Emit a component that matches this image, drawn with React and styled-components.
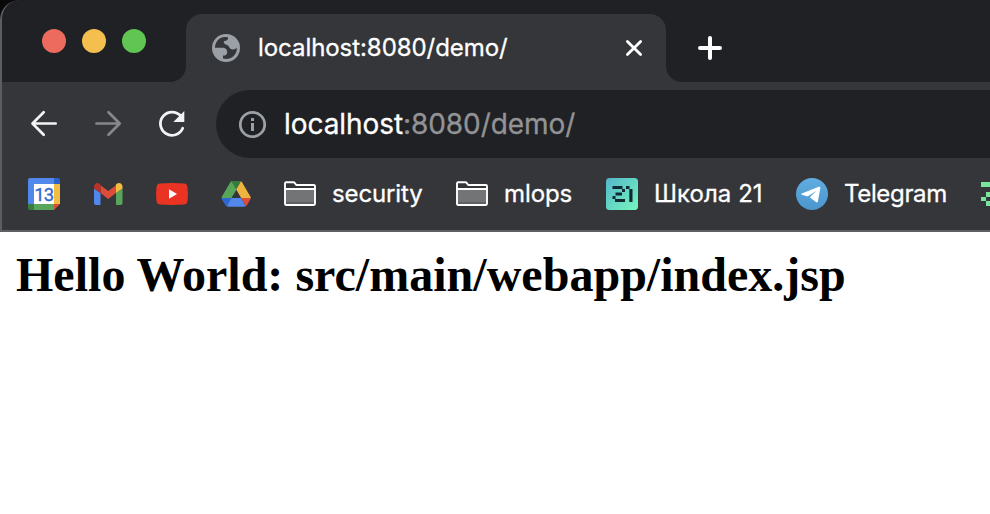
import React from "react";
import styled, { createGlobalStyle } from "styled-components";

const Global = createGlobalStyle`
  * { box-sizing: border-box; }
  html, body { margin: 0; padding: 0; background: #fff; overflow: hidden; }
`;

const Window = styled.div`
  width: 990px;
  height: 514px;
  overflow: hidden;
  background: #fff;
  color: #fff;
  font-family: Inter, "Noto Sans", sans-serif;
`;

const Backdrop = styled.div`
  background: #09090a;
`;

const Chrome = styled.header`
  height: 232px;
  border-left: 2px solid #5c5d61;
  border-bottom: 2px solid #605f64;
  border-top-left-radius: 20px;
  background: #35363a;
  overflow: hidden;
`;

const TabStrip = styled.div`
  display: flex;
  height: 82px;
`;

const StripStart = styled.div`
  display: flex;
  gap: 16px;
  width: 184px;
  padding: 29px 0 0 40px;
  background: #202124;
  border-bottom-right-radius: 16px;
`;

const Light = styled.span`
  width: 24px;
  height: 24px;
  border-radius: 50%;
  background: ${(p) => p.$color};
`;

const TabSlot = styled.div`
  width: 480px;
  padding-top: 14px;
  background: linear-gradient(#202124 50px, #35363a 50px);
`;

const Tab = styled.div`
  display: flex;
  align-items: center;
  height: 68px;
  padding: 0 24px 0 26px;
  border-radius: 16px 16px 0 0;
  background: #35363a;
`;

const TabTitle = styled.span`
  flex: 1;
  margin-left: 18px;
  font-size: 24px;
  line-height: 32px;
  letter-spacing: -0.06px;
  -webkit-text-stroke: 0.3px currentColor;
  white-space: nowrap;
`;

const StripEnd = styled.div`
  flex: 1;
  padding: 36px 0 0 32px;
  background: #202124;
  border-bottom-left-radius: 16px;
`;

const Toolbar = styled.div`
  display: flex;
  height: 76px;
  padding: 8px 0 0 28px;
`;

const NavButtons = styled.div`
  display: flex;
  align-items: center;
  gap: 32px;
  width: 186px;
  height: 68px;
`;

const Omnibox = styled.div`
  display: flex;
  flex: 1;
  align-items: center;
  padding-left: 22px;
  border-radius: 34px 0 0 34px;
  background: #202124;
`;

const Url = styled.span`
  margin-left: 17px;
  font-size: 28px;
  line-height: 36px;
  letter-spacing: -0.07px;
  -webkit-text-stroke: 0.3px currentColor;
  color: #929396;
  white-space: nowrap;
`;

const Host = styled.span`
  color: #fff;
`;

const Bookmarks = styled.nav`
  display: flex;
  align-items: center;
  height: 72px;
  padding-left: 26px;
`;

const Bookmark = styled.div`
  display: flex;
  flex: none;
  align-items: center;
  width: ${(p) => p.$width}px;
`;

const BookmarkLabel = styled.span`
  margin-left: 16px;
  font-size: 24px;
  line-height: 32px;
  letter-spacing: ${(p) => p.$tracking || 0}px;
  -webkit-text-stroke: 0.3px currentColor;
  white-space: nowrap;
`;

const Icon = styled.svg`
  display: block;
  flex: none;
  overflow: visible;
`;

const Page = styled.main`
  padding: 15px 16px;
`;

const Heading = styled.h2`
  margin: 0;
  color: #000;
  font: bold 48px/55px "Liberation Serif", "Times New Roman", serif;
  letter-spacing: 0.02px;
  white-space: nowrap;
`;

const GlobeIcon = () => (
  <Icon width="28" height="28" viewBox="0 0 28 28">
    <circle cx="14" cy="14" r="14" fill="#9aa0a6" />
    <path
      d="M3 13.8C3 8.100 7.200 3.400 12.600 3.100L16 3.200V4.600Q15.800 6.600 13.800 6.800L11.800 7.200Q11.400 10 14.600 10.800 17 11.600 17.600 13.800 18.400 15.800 21 15.500 23.600 15.200 24.900 13.800 24.900 20 20.300 23.200 16.500 25.800 11 24.500V21.500H13.200Q15.300 20.800 15.200 18.300 15.100 14.600 11.500 13.800Z"
      fill="#35363a"
    />
  </Icon>
);

const CloseIcon = () => (
  <Icon width="16" height="16" viewBox="0 0 16 16" stroke="#fff" strokeWidth="2.8" strokeLinecap="round">
    <path d="M1.4 1.4 14.6 14.6M14.6 1.4 1.4 14.6" />
  </Icon>
);

const PlusIcon = () => (
  <Icon width="24" height="24" viewBox="0 0 24 24" stroke="#fff" strokeWidth="4" strokeLinecap="round">
    <path d="M12 2v20M2 12h20" />
  </Icon>
);

const BackIcon = () => (
  <Icon width="32" height="32" viewBox="0 0 32 32" fill="none" stroke="#f1f3f4" strokeWidth="2.7" strokeLinecap="round" strokeLinejoin="round">
    <path d="M13.7 4.300 2.500 15.500l11.200 11.200M3 15.500h22.700" />
  </Icon>
);

const ForwardIcon = () => (
  <Icon width="32" height="32" viewBox="0 0 32 32" fill="none" stroke="#87888b" strokeWidth="2.7" strokeLinecap="round" strokeLinejoin="round">
    <path d="M14.500 4.300 25.700 15.500 14.500 26.700M25.200 15.500H2.500" />
  </Icon>
);

const ReloadIcon = () => (
  <Icon width="32" height="32" viewBox="0 0 32 32">
    <path d="M22.900 8.200A11.600 11.600 0 1 0 24.700 20.200" fill="none" stroke="#f1f3f4" strokeWidth="2.8" strokeLinecap="round" />
    <path d="M28 3v11H17Z" transform="translate(-1.700 0)" fill="#f1f3f4" />
  </Icon>
);

const InfoIcon = () => (
  <Icon width="29" height="28" viewBox="0 0 29 28">
    <circle cx="14.5" cy="14.500" r="12.2" fill="none" stroke="#9aa0a6" strokeWidth="2.800" />
    <path d="M13 8h3v3h-3zM13 13h3v8h-3z" fill="#9aa0a6" />
  </Icon>
);

const CalendarIcon = () => (
  <Icon width="32" height="32" viewBox="0 0 32 32">
    <path d="M2 0h24v6H6v20H0V2Q0 0 2 0Z" fill="#5287ec" />
    <path d="M26 0h4q2 0 2 2v4h-6Z" fill="#2d63c7" />
    <path d="M26 6h6v20h-6Z" fill="#f3bd42" />
    <path d="M0 26h6v6H2q-2 0-2-2Z" fill="#367d3e" />
    <path d="M6 26h20v6H6Z" fill="#58a55c" />
    <path d="M26 26h6l-6 6Z" fill="#db4c3b" />
    <path d="M6 6h20v20H6Z" fill="#fff" />
    <text x="6.300" y="22.7" fontFamily="Roboto, sans-serif" fontSize="18.5" fill="#3167cd" stroke="#3167cd" strokeWidth=".3" letterSpacing="-1">13</text>
  </Icon>
);

const GmailIcon = () => (
  <Icon width="32" height="32" viewBox="0 0 32 32">
    <path d="M2 10.5 8.5 15v12H4q-2 0-2-2Z" fill="#5287ec" />
    <path d="M24 15l6.5-4.5V25q0 2-2 2H24Z" fill="#58a55c" />
    <path d="M8.5 7.200 16.2 12.900 24 7.200V15l-7.8 6-7.7-6Z" fill="#db4c3b" />
    <path d="M2 10.5V8.7c0-3.2 3.3-4.7 5.7-3l.8.6V15L2 10.5Z" fill="#b7332a" />
    <path d="M24 6.3l.8-.6c2.4-1.7 5.7-.2 5.7 3v1.8L24 15Z" fill="#f3bd42" />
  </Icon>
);

const YoutubeIcon = () => (
  <Icon width="32" height="32" viewBox="0 0 32 32">
    <path d="M4 5.4q12-.8 24 0 3.2.2 3.5 3.7.9 7 0 14-.3 3.2-3.5 3.5-12 .8-24 0-3.2-.3-3.5-3.5-.9-7 0-14Q.8 5.6 4 5.4Z" fill="#ea3323" />
    <path d="M13 11.3v9.5l8-4.7Z" fill="#fff" />
  </Icon>
);

const DriveIcon = () => (
  <Icon width="32" height="32" viewBox="0 0 32 32">
    <path d="M11.5 3.2Q12 3 13 3h3l.5 8.5L11.400 20H1.6q0-1 .5-1.8L10.5 4Z" fill="#58a55c" />
    <path d="M11.3 3.3Q12 3 13 3h6.5q1 0 1.6.3L16.2 11.6Z" fill="#347b3c" />
    <path d="M16.2 11.6 21 3.3q.6.3 1 1l8.2 14q.5.8.5 1.7H21.2Z" fill="#f1b340" />
    <path d="M1.6 20h9.8l-4.7 8.3q-.7-.3-1.2-1L2 21.5Q1.6 20.8 1.6 20Z" fill="#2d69d5" />
    <path d="M11.4 20h9.8l4.5 8.3q-.7.4-1.5.4H8.2q-.8 0-1.5-.4Z" fill="#5287ec" />
    <path d="M21.2 20h9.5q0 .8-.4 1.5l-3.4 5.8q-.5.7-1.2 1Z" fill="#db4c3b" />
  </Icon>
);

const FolderIcon = () => (
  <Icon width="32" height="32" viewBox="0 0 32 32">
    <path d="M1 12h30v14H1Z" fill="#737476" />
    <path d="M1 24h30v3H1Z" fill="#5e5f61" />
    <path d="M1 11V5.5Q1 4.3 2.2 4.3H9.5q.8 0 1.2.6L12.2 7h17.6Q31 7 31 8.2v17.600q0 1.200-1.200 1.200H2.200Q1 27 1 25.800V11h30" fill="none" stroke="#fff" strokeWidth="1.900" strokeLinejoin="round" />
  </Icon>
);

const SchoolIcon = () => (
  <Icon width="32" height="32" viewBox="0 0 32 32">
    <defs>
      <linearGradient id="school" x1="0" y1="0" x2="1" y2="1">
        <stop offset="0" stopColor="#55b6ca" />
        <stop offset="1" stopColor="#75f6bd" />
      </linearGradient>
    </defs>
    <rect width="32" height="32" rx="3.5" fill="url(#school)" />
    <path d="M6.5 8h10v3h-10zM16 11h3v3h-3zM9.500 14.500h6.500v3H9.500zM6.500 18h3v3h-3zM9 21h10v3H9zM20 8h3.500v3H20zM23.300 11H26.500v13h-3.200z" fill="#122832" />
  </Icon>
);

const TelegramIcon = () => (
  <Icon width="32" height="32" viewBox="0 0 32 32">
    <defs>
      <linearGradient id="telegram" x1="0" y1="0" x2="0" y2="1">
        <stop offset="0" stopColor="#60ade2" />
        <stop offset="1" stopColor="#4b96cd" />
      </linearGradient>
    </defs>
    <circle cx="16" cy="16" r="16" fill="url(#telegram)" />
    <path d="M5.8 15.5 22.8 8.8q1.7-.5 1.5 1.3L22 23q-.4 2.1-2.1 1l-5.3-4q-.9-.8 0-1.6l6-5.6-8.2 5.2q-.7.4-1.5.2l-4.9-1.5q-1.7-.5-.2-1.2Z" fill="#fff" />
  </Icon>
);

const PixelIcon = () => (
  <Icon width="32" height="32" viewBox="0 0 32 32">
    <path d="M1 4h17v5H1zM6 14h10v5H6zM1 19h5v4H1zM6 23h14v5H6z" fill="#79e69e" />
  </Icon>
);

export default function App() {
  return (
    <Window>
      <Global />
      <Backdrop>
        <Chrome>
          <TabStrip>
            <StripStart>
              <Light $color="#ed6a5e" />
              <Light $color="#f5bf4f" />
              <Light $color="#61c554" />
            </StripStart>
            <TabSlot>
              <Tab>
                <GlobeIcon />
                <TabTitle>localhost:8080/demo/</TabTitle>
                <CloseIcon />
              </Tab>
            </TabSlot>
            <StripEnd>
              <PlusIcon />
            </StripEnd>
          </TabStrip>
          <Toolbar>
            <NavButtons>
              <BackIcon />
              <ForwardIcon />
              <ReloadIcon />
            </NavButtons>
            <Omnibox>
              <InfoIcon />
              <Url><Host>localhost</Host>:8080/demo/</Url>
            </Omnibox>
          </Toolbar>
          <Bookmarks>
            <Bookmark $width={64}><CalendarIcon /></Bookmark>
            <Bookmark $width={64}><GmailIcon /></Bookmark>
            <Bookmark $width={64}><YoutubeIcon /></Bookmark>
            <Bookmark $width={64}><DriveIcon /></Bookmark>
            <Bookmark $width={172}><FolderIcon /><BookmarkLabel $tracking={-0.12}>security</BookmarkLabel></Bookmark>
            <Bookmark $width={150}><FolderIcon /><BookmarkLabel $tracking={-0.1}>mlops</BookmarkLabel></Bookmark>
            <Bookmark $width={190}><SchoolIcon /><BookmarkLabel $tracking={0.05}>Школа 21</BookmarkLabel></Bookmark>
            <Bookmark $width={184}><TelegramIcon /><BookmarkLabel $tracking={-0.35}>Telegram</BookmarkLabel></Bookmark>
            <Bookmark $width={32}><PixelIcon /></Bookmark>
          </Bookmarks>
        </Chrome>
      </Backdrop>
      <Page>
        <Heading>Hello World: src/main/webapp/index.jsp</Heading>
      </Page>
    </Window>
  );
}
